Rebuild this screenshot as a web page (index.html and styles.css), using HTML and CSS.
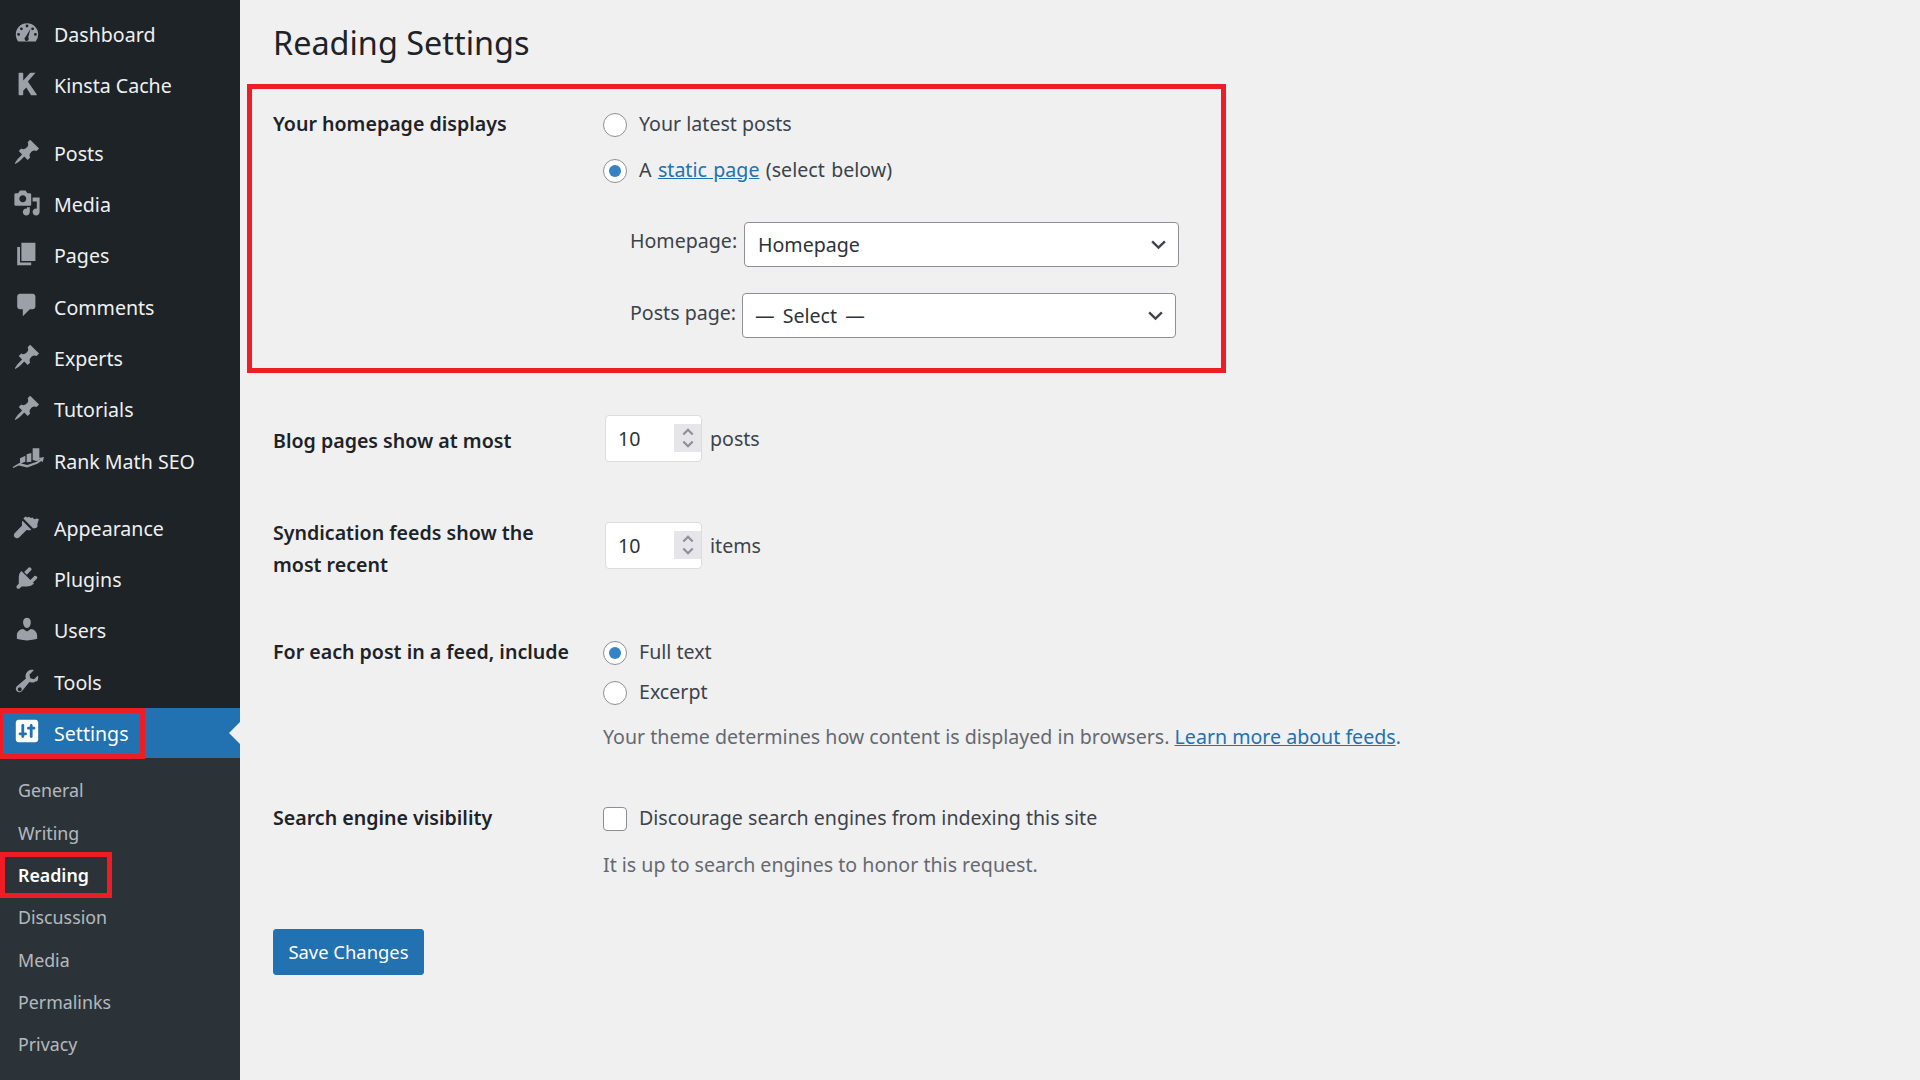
FILE: index.html
```html
<!DOCTYPE html>
<html lang="en">
<head>
<meta charset="utf-8">
<title>Reading Settings</title>
<link rel="stylesheet" href="styles.css">
</head>
<body>
<div class="app">
  <nav class="side">
    <ul class="menu">
      <li class="item"><svg class="ico" viewBox="0 0 20 20"><path d="M3.76 16h12.48A7.97 7.97 0 0 0 18 11a8 8 0 1 0-16 0c0 1.89.66 3.63 1.76 5zM10 4a1 1 0 1 1 0 2 1 1 0 0 1 0-2zM6 6a1 1 0 1 1 0 2 1 1 0 0 1 0-2zm8 0a1 1 0 1 1 0 2 1 1 0 0 1 0-2zM4 10a1 1 0 1 1 0 2 1 1 0 0 1 0-2zm12 0a1 1 0 1 1 0 2 1 1 0 0 1 0-2zm-3.5-3-1.6 6.1a1.5 1.5 0 1 1-1.8-.4z" fill-rule="evenodd"/></svg><span>Dashboard</span></li>
      <li class="item"><svg class="ico" viewBox="0 0 20 20"><path d="M4 2.5c0-.3.2-.5.5-.5h2.3c.3 0 .5.2.5.5v5L12 2.4c.2-.2.4-.4.7-.4h3.4L10.600 8.200 17 17.500c.1.200 0 .5-.3.5h-3.300c-.3 0-.5-.1-.7-.4L9.500 12.500 7.300 14.800v2.700c0 .3-.2.5-.5.5H4.500c-.3 0-.5-.2-.5-.5z"/></svg><span>Kinsta Cache</span></li>
      <li class="sep"></li>
      <li class="item"><svg class="ico" viewBox="0 0 20 20"><path d="M10.440 3.020l1.820-1.820 6.360 6.350-1.830 1.820c-1.050-.68-2.480-.57-3.410.36l-.75.750c-.92.930-1.040 2.350-.35 3.400l-1.830 1.820-2.410-2.410-2.800 2.790c-.42.420-3.380 2.710-3.800 2.290s1.860-3.390 2.280-3.810l2.790-2.790L4.100 9.360l1.830-1.820c1.050.69 2.480.57 3.400-.36l.75-.75c.93-.92 1.050-2.350.36-3.410z"/></svg><span>Posts</span></li>
      <li class="item"><svg class="ico" viewBox="0 0 20 20"><path d="M13 11V4c0-.55-.45-1-1-1h-1.670L9 1H5L3.670 3H2c-.55 0-1 .45-1 1v7c0 .55.45 1 1 1h10c.55 0 1-.45 1-1zM7 4.500c1.380 0 2.500 1.120 2.500 2.500S8.380 9.500 7 9.500 4.500 8.380 4.500 7 5.620 4.500 7 4.500zM14 6h5v10.500c0 1.380-1.120 2.500-2.500 2.500S14 17.880 14 16.500s1.120-2.500 2.500-2.500c.17 0 .34.020.5.050V9h-3V6zm-4 8.050V13h2v3.500c0 1.380-1.120 2.500-2.500 2.500S7 17.880 7 16.500 8.120 14 9.500 14c.17 0 .34.020.5.050z"/></svg><span>Media</span></li>
      <li class="item"><svg class="ico" viewBox="0 0 20 20"><path d="M6 15V2h10v13H6zm-1 1h8v2H3V5h2v11z"/></svg><span>Pages</span></li>
      <li class="item"><svg class="ico" viewBox="0 0 20 20"><path d="M5 2h9c1.100 0 2 .9 2 2v7c0 1.100-.9 2-2 2h-2l-5 5v-5H5c-1.100 0-2-.9-2-2V4c0-1.100.9-2 2-2z"/></svg><span>Comments</span></li>
      <li class="item"><svg class="ico" viewBox="0 0 20 20"><path d="M10.440 3.020l1.820-1.820 6.360 6.350-1.830 1.820c-1.050-.68-2.480-.57-3.410.36l-.75.750c-.92.930-1.040 2.350-.35 3.400l-1.830 1.820-2.410-2.410-2.800 2.790c-.42.420-3.380 2.710-3.800 2.290s1.860-3.390 2.280-3.810l2.790-2.790L4.100 9.360l1.830-1.820c1.050.69 2.480.57 3.400-.36l.75-.75c.93-.92 1.050-2.350.36-3.410z"/></svg><span>Experts</span></li>
      <li class="item"><svg class="ico" viewBox="0 0 20 20"><path d="M10.440 3.020l1.820-1.820 6.360 6.350-1.830 1.820c-1.050-.68-2.480-.57-3.410.36l-.75.750c-.92.930-1.040 2.350-.35 3.400l-1.830 1.820-2.410-2.410-2.800 2.790c-.42.420-3.380 2.710-3.800 2.290s1.860-3.390 2.280-3.810l2.790-2.790L4.100 9.360l1.830-1.820c1.050.69 2.480.57 3.400-.36l.75-.75c.93-.92 1.050-2.350.36-3.410z"/></svg><span>Tutorials</span></li>
      <li class="item"><svg class="ico ico-wide" viewBox="0 0 24 20"><path d="M6 9.500l4-2V12l-4 1.500zM11 6.500l3.500-1V12L11 12.500zM15.500 2h5v9l-2 .5-3-.7zM.5 16l5-3 6 1.500 7-2.500 2.500-1.700-1-1 4-.8-1 4-1-1-3 2-7.500 2.800-6.500-1.500-4 2z"/></svg><span>Rank Math SEO</span></li>
      <li class="sep"></li>
      <li class="item"><svg class="ico" viewBox="0 0 20 20"><path d="M14.480 11.060L7.410 3.990l1.500-1.500 1.400.7 1.200-.5 1.100.9 1.400-.3 1.100 1.100 1.800-.4 1.600.5-1.100 3.300.1 1.900-1 1.100zM13.100 11.900c-.7.700-3.400.300-3.400.300L4.500 17.400c-.9.900-2.300.9-3.200 0s-.9-2.300 0-3.200l5.200-5.200s-.4-2.700.3-3.400z"/></svg><span>Appearance</span></li>
      <li class="item"><svg class="ico" viewBox="0 0 20 20"><path d="M13.110 4.360L9.870 7.600 8 5.730l3.240-3.240c.35-.34 1.050-.2 1.560.32.520.51.660 1.210.31 1.550zm-8 1.770l.91-1.120 9.010 9.010-1.190.84c-.71.710-2.630 1.160-3.820 1.160H6.140L4.880 17.280c-.56.560-1.460.56-2.020 0-.55-.55-.55-1.450 0-2l1.260-1.260v-3.850c0-1.180.3-3.330 1-4.040zm12.050 4.260L13.920 13.630 12.050 11.760l3.240-3.240c.34-.35 1.040-.21 1.550.31.520.51.660 1.210.32 1.560z"/></svg><span>Plugins</span></li>
      <li class="item"><svg class="ico" viewBox="0 0 20 20"><path d="M10 9.250c-2.270 0-2.730-3.440-2.730-3.440C7 4.020 7.820 2 9.970 2c2.160 0 2.980 2.020 2.710 3.810 0 0-.41 3.440-2.680 3.440zm0 2.570L12.720 10c2.390 0 4.520 2.330 4.520 4.530v2.490s-3.650 1.130-7.240 1.130c-3.650 0-7.240-1.130-7.240-1.130v-2.490c0-2.250 1.940-4.480 4.470-4.480z"/></svg><span>Users</span></li>
      <li class="item"><svg class="ico" viewBox="0 0 20 20"><path d="M16.680 9.770c-1.340 1.340-3.300 1.670-4.950.99l-5.410 6.520c-.99.990-2.590.99-3.570 0-.99-.98-.99-2.580 0-3.570l6.520-5.420c-.68-1.650-.35-3.610.99-4.950 1.280-1.280 3.120-1.640 4.720-1.110L11.710 5.500l.71 2.570 2.580.71 2.810-2.790c.54 1.600.17 3.450-1.120 4.780zM3.830 16.880c.55.550 1.440.55 1.990 0 .55-.55.550-1.440 0-1.990s-1.440-.55-1.990 0-.55 1.440 0 1.990z"/></svg><span>Tools</span></li>
      <li class="item item-active"><svg class="ico" viewBox="0 0 20 20"><path fill-rule="evenodd" d="M18 16V4c0-1.100-.9-2-2-2H4c-1.100 0-2 .9-2 2v12c0 1.100.9 2 2 2h12c1.100 0 2-.9 2-2zM8 11h1c.55 0 1 .45 1 1s-.45 1-1 1H8v1c0 .55-.45 1-1 1s-1-.45-1-1v-1H5c-.55 0-1-.45-1-1s.45-1 1-1h1V6c0-.55.45-1 1-1s1 .45 1 1v5zm7-2h-1v5c0 .55-.45 1-1 1s-1-.45-1-1V9h-1c-.55 0-1-.45-1-1s.45-1 1-1h1V6c0-.55.45-1 1-1s1 .45 1 1v1h1c.55 0 1 .45 1 1s-.45 1-1 1z"/></svg><span class="active-text">Settings</span><i class="arrow"></i><b class="mark mark-settings"></b></li>
      <li class="submenu">
        <ul class="sublist">
          <li class="sub">General</li>
          <li class="sub">Writing</li>
          <li class="sub sub-current">Reading<b class="mark mark-reading"></b></li>
          <li class="sub">Discussion</li>
          <li class="sub">Media</li>
          <li class="sub">Permalinks</li>
          <li class="sub">Privacy</li>
          <li class="sub">Cloudflare</li>
        </ul>
      </li>
    </ul>
  </nav>
  <main class="content">
    <h1 class="title">Reading Settings</h1>
    <section class="highlight">
      <div class="row row-home">
        <div class="label label-home">Your homepage displays</div>
        <div class="field">
          <label class="opt opt-1"><i class="radio"></i>Your latest posts</label>
          <label class="opt opt-2"><i class="radio radio-on"></i><span class="wide-words">A <a class="link" href="#">static page</a> (select below)</span></label>
          <div class="pick pick-1"><span class="pick-label pick-label-a">Homepage:</span><span class="select select-a">Homepage<svg class="chev" viewBox="0 0 16 16"><path d="M2 5l6 6 6-6"/></svg></span></div>
          <div class="pick pick-2"><span class="pick-label pick-label-b">Posts page:</span><span class="select select-b">— Select —<svg class="chev" viewBox="0 0 16 16"><path d="M2 5l6 6 6-6"/></svg></span></div>
        </div>
      </div>
    </section>
    <div class="row row-blog">
      <div class="label label-num">Blog pages show at most</div>
      <div class="field num-field"><span class="num">10<span class="spin"><svg viewBox="0 0 12 24"><path d="M2 9l4-4 4 4M2 15l4 4 4-4"/></svg></span></span><span class="unit">posts</span></div>
    </div>
    <div class="row row-synd">
      <div class="label label-synd">Syndication feeds show the most recent</div>
      <div class="field num-field"><span class="num">10<span class="spin"><svg viewBox="0 0 12 24"><path d="M2 9l4-4 4 4M2 15l4 4 4-4"/></svg></span></span><span class="unit">items</span></div>
    </div>
    <div class="row row-feed">
      <div class="label">For each post in a feed, include</div>
      <div class="field">
        <label class="opt opt-f1"><i class="radio radio-on"></i>Full text</label>
        <label class="opt opt-f2"><i class="radio"></i>Excerpt</label>
        <p class="desc desc-f">Your theme determines how content is displayed in browsers. <a class="link" href="#">Learn more about feeds</a>.</p>
      </div>
    </div>
    <div class="row row-search">
      <div class="label">Search engine visibility</div>
      <div class="field">
        <label class="opt opt-c"><i class="check"></i>Discourage search engines from indexing this site</label>
        <p class="desc desc-s">It is up to search engines to honor this request.</p>
      </div>
    </div>
    <button class="save" type="button">Save Changes</button>
  </main>
</div>
</body>
</html>
```
FILE: styles.css
```css
* { box-sizing: border-box; }
html, body { margin: 0; height: 100%; overflow: hidden; }
body { background: #f0f0f1; color: #3c434a; font-family: "Noto Sans", "Open Sans", sans-serif; font-size: 19.6px; line-height: 1.33; }
ul { list-style: none; margin: 0; padding: 0; }
.app { display: flex; height: 1080px; overflow: hidden; }
.side { width: 240px; flex: none; height: 1080px; background: #1d2327; color: #f0f0f1; overflow: hidden; padding-top: 9px; }
.item { position: relative; display: flex; align-items: center; height: 51.3px; padding-left: 54px; font-size: 19.6px; }
.item span { padding-top: 1px; }
.ico { position: absolute; left: 13px; top: 10px; width: 28px; height: 28px; fill: #9ca1a7; }
.ico-wide { left: 12px; width: 32px; }
.sep { height: 16px; }
.item-active { background: #2271b1; color: #fff; height: 50.500px; }
.item-active .ico { fill: #fff; top: 9px; }
.item .active-text { padding-top: 2px; }
.arrow { position: absolute; right: 0; top: 14px; border: 11px solid transparent; border-right-color: #f0f0f1; border-left-width: 0; }
.mark { position: absolute; border: 5px solid #ee1c25; }
.mark-settings { left: 0; top: 0; width: 145px; height: 51px; border-left-width: 3px; }
.submenu { background: #2c3338; padding-top: 11px; }
.sub { position: relative; height: 42.350px; padding-left: 18px; font-size: 17.800px; line-height: 42px; color: rgba(240,246,252,.7); }
.sub-current { color: #fff; font-weight: 600; }
.mark-reading { left: 0; top: -2px; width: 112px; height: 46px; }
.content { flex: 1; padding: 0 0 0 33px; min-width: 0; }
.title { margin: 0; padding-top: 19px; height: 84px; font-size: 32.400px; font-weight: 400; line-height: 46px; color: #1d2327; }
.highlight { position: relative; margin-left: -26px; width: 979px; height: 289px; border: 5px solid #ee1c25; padding: 23px 0 0 21px; }
.row { display: grid; grid-template-columns: 330px 1fr; }
.label { font-weight: 600; color: #1d2327; line-height: 32px; }
.label-home { margin-top: -4px; }
.field { position: relative; }
.opt { display: flex; align-items: center; height: 24px; gap: 12px; padding-bottom: 2px; }
.radio, .check { flex: none; width: 24px; height: 24px; margin-bottom: -2px; background: #fff; border: 1px solid #8c8f94; border-radius: 50%; position: relative; }
.check { border-radius: 4px; }
.radio-on::after { content: ""; position: absolute; left: 5px; top: 5px; width: 12px; height: 12px; border-radius: 50%; background: #3582c4; }
.link { color: #2271b1; text-decoration: underline; }
.wide-words { word-spacing: 1.300px; }
.opt-1 { margin-top: 1px; }
.opt-2 { margin-top: 22px; }
.pick { display: flex; align-items: flex-start; padding-left: 27px; color: #3c434a; }
.pick-1 { margin-top: 39px; }
.pick-2 { margin-top: 26px; }
.pick-label { line-height: 32px; }
.pick-label-a { width: 114px; padding-top: 3px; }
.pick-label-b { width: 112px; padding-top: 4px; }
.select { position: relative; display: block; width: 435px; height: 45px; background: #fff; border: 1px solid #8c8f94; border-radius: 4px; line-height: 44px; padding-left: 13px; color: #2c3338; }
.select-b { padding-left: 12px; width: 434px; word-spacing: 3px; }
.chev { position: absolute; right: 11px; top: 13px; width: 17px; height: 17px; fill: none; stroke: #3c434a; stroke-width: 2.200; }
.row-blog { margin-top: 42px; }
.num-field { display: flex; align-items: center; gap: 8px; height: 47px; padding-left: 2px; }
.label-num { line-height: 52px; }
.num { position: relative; display: block; width: 97px; height: 47px; background: #fff; border: 1px solid #dcdcde; border-radius: 4px; line-height: 45px; padding-left: 12px; color: #2c3338; }
.unit { padding-top: 1px; }
.spin { position: absolute; right: 0; top: 8px; width: 27px; height: 28px; background: #e6e5e9; display: flex; justify-content: center; }
.spin svg { width: 14px; height: 28px; fill: none; stroke: #8f8d96; stroke-width: 1.800; }
.row-synd { margin-top: 55px; }
.label-synd { width: 290px; margin-top: -5px; }
.row-feed { margin-top: 55px; }
.opt-f1 { margin-top: 5px; }
.opt-f2 { margin-top: 16px; }
.desc { margin: 0; color: #646970; }
.desc-f { margin-top: 19px; }
.row-search { margin-top: 52px; }
.opt-c { margin-top: 5px; }
.desc-s { margin-top: 21px; }
.save { display: block; margin-top: 51px; width: 151px; height: 46px; background: #2271b1; color: #fff; border: 1px solid #2271b1; border-radius: 3px; font: inherit; font-size: 18.400px; padding: 0; }
```
